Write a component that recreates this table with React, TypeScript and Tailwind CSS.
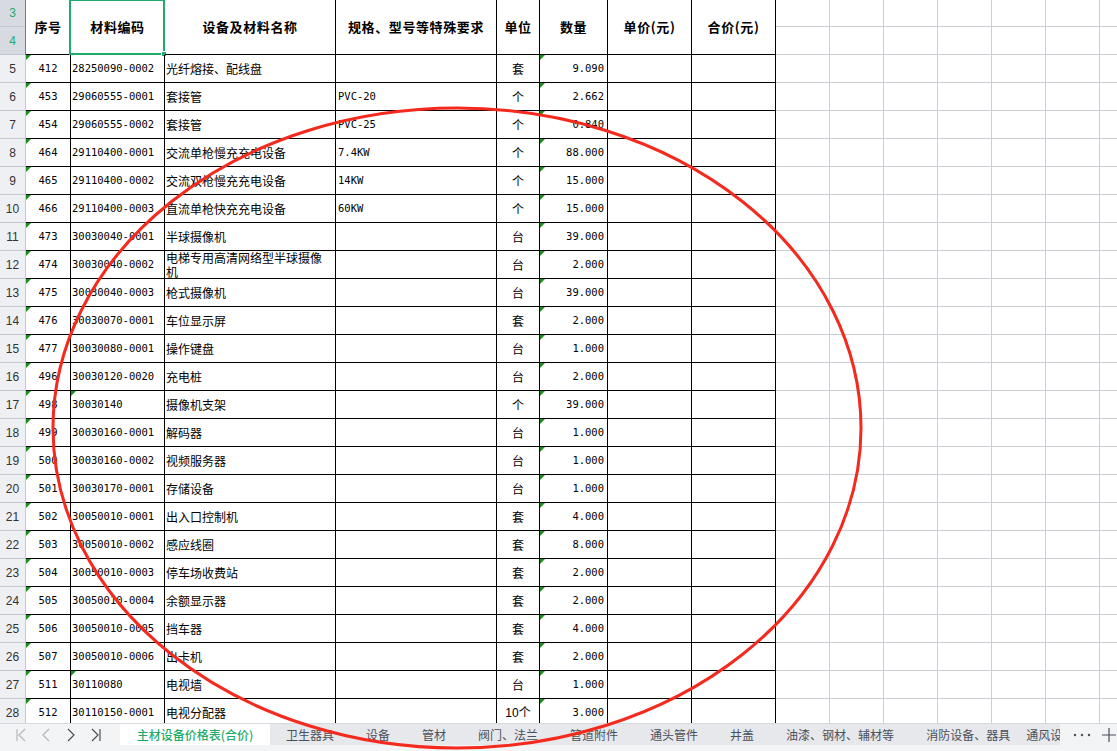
import React from "react";

const MONO = "font-['DejaVu_Sans_Mono','Noto_Sans_CJK_SC',monospace] text-[10.5px]";
const CJK = "font-['Noto_Sans_CJK_SC',sans-serif] text-[12px]";

// widths include the 1px right border
const COL_W = [
  "w-[45px]",
  "w-[94px]",
  "w-[171px]",
  "w-[161px]",
  "w-[43px]",
  "w-[68px]",
  "w-[84px]",
  "w-[84px]",
];
const LIGHT_COUNT = 7;

type Row = [number, string, string, string, string, string, string, boolean?];

const ROWS: Row[] = [
  [5, "412", "28250090-0002", "光纤熔接、配线盘", "", "套", "9.090"],
  [6, "453", "29060555-0001", "套接管", "PVC-20", "个", "2.662"],
  [7, "454", "29060555-0002", "套接管", "PVC-25", "个", "0.840"],
  [8, "464", "29110400-0001", "交流单枪慢充充电设备", "7.4KW", "个", "88.000"],
  [9, "465", "29110400-0002", "交流双枪慢充充电设备", "14KW", "个", "15.000"],
  [10, "466", "29110400-0003", "直流单枪快充充电设备", "60KW", "个", "15.000"],
  [11, "473", "30030040-0001", "半球摄像机", "", "台", "39.000"],
  [12, "474", "30030040-0002", "电梯专用高清网络型半球摄像机", "", "台", "2.000"],
  [13, "475", "30030040-0003", "枪式摄像机", "", "台", "39.000"],
  [14, "476", "30030070-0001", "车位显示屏", "", "套", "2.000"],
  [15, "477", "30030080-0001", "操作键盘", "", "台", "1.000"],
  [16, "496", "30030120-0020", "充电桩", "", "台", "2.000"],
  [17, "498", "30030140", "摄像机支架", "", "个", "39.000", true],
  [18, "499", "30030160-0001", "解码器", "", "台", "1.000"],
  [19, "500", "30030160-0002", "视频服务器", "", "台", "1.000"],
  [20, "501", "30030170-0001", "存储设备", "", "台", "1.000"],
  [21, "502", "30050010-0001", "出入口控制机", "", "套", "4.000"],
  [22, "503", "30050010-0002", "感应线圈", "", "套", "8.000"],
  [23, "504", "30050010-0003", "停车场收费站", "", "套", "2.000"],
  [24, "505", "30050010-0004", "余额显示器", "", "套", "2.000"],
  [25, "506", "30050010-0005", "挡车器", "", "套", "4.000"],
  [26, "507", "30050010-0006", "出卡机", "", "套", "2.000"],
  [27, "511", "30110080", "电视墙", "", "台", "1.000", true],
  [28, "512", "30110150-0001", "电视分配器", "", "10个", "3.000"],
];

const HEADERS = ["序号", "材料编码", "设备及材料名称", "规格、型号等特殊要求", "单位", "数量", "单价(元)", "合价(元)"];

const TABS = [
  "卫生器具",
  "设备",
  "管材",
  "阀门、法兰",
  "管道附件",
  "通头管件",
  "井盖",
  "油漆、钢材、辅材等",
  "消防设备、器具",
];

/** Small green "number stored as text" marker in the top-left corner of a cell. */
function Flag() {
  return (
    <span className="absolute left-0 top-0 h-0 w-0 border-r-[5px] border-t-[5px] border-r-transparent border-t-[#1a8f1a]" />
  );
}

function LightCells({ h }: { h: string }) {
  return (
    <>
      {Array.from({ length: LIGHT_COUNT }).map((_, i) => (
        <div key={i} className={`${h} w-[54px] shrink-0 border-b border-r border-[#c9ced8]`} />
      ))}
    </>
  );
}

function HeaderRow() {
  return (
    <div className="flex h-[55px] shrink-0">
      {/* Row numbers 3 & 4 (selected) */}
      <div className="flex w-[26px] shrink-0 flex-col border-r border-[#1fab6b] bg-[#d7dae0] font-['Liberation_Sans',sans-serif] text-[12px] text-[#1fab6b]">
        <div className="flex h-[27px] items-center justify-center border-b border-[#c3c8d0]">3</div>
        <div className="flex h-[28px] items-center justify-center border-b border-[#c3c8d0]">4</div>
      </div>
      {HEADERS.map((t, i) => (
        <div
          key={t}
          className={`relative flex h-[55px] shrink-0 items-center justify-center border-b border-r border-black font-['Noto_Sans_CJK_SC',sans-serif] text-[13px] font-bold tracking-[0.6px] text-black ${COL_W[i]}`}
        >
          {t}
          {i === 1 && (
            <>
              <span className="absolute -left-[2px] -top-[1px] bottom-[-1px] right-[-1px] border-2 border-[#1fab6b]" />
              <span className="absolute -bottom-[3px] -right-[3px] h-[6px] w-[6px] border border-white bg-[#1fab6b]" />
            </>
          )}
        </div>
      ))}
      <div className="flex flex-col">
        <div className="flex">
          <LightCells h="h-[27px]" />
        </div>
        <div className="flex">
          <LightCells h="h-[28px]" />
        </div>
      </div>
    </div>
  );
}

function DataRow({ row }: { row: Row }) {
  const [n, seq, code, name, spec, unit, qty, codeFlag] = row;
  const wrap = name.length > 13;
  return (
    <div className="flex h-[28px] shrink-0">
      <div className="flex w-[26px] shrink-0 items-center justify-center border-b border-r border-[#c3c8d0] bg-[#eef0f3] font-['Liberation_Sans',sans-serif] text-[12px] text-[#333]">
        {n}
      </div>
      {/* 序号 */}
      <div className={`relative flex shrink-0 items-center justify-center border-b border-r border-black text-black ${MONO} ${COL_W[0]}`}>
        <Flag />
        {seq}
      </div>
      {/* 材料编码 */}
      <div className={`relative flex shrink-0 items-center border-b border-r border-black pl-[1px] text-black ${MONO} ${COL_W[1]}`}>
        {codeFlag && <Flag />}
        {code}
      </div>
      {/* 名称 */}
      <div
        className={`flex shrink-0 items-center overflow-hidden border-b border-r border-black pl-[1px] text-black ${CJK} ${COL_W[2]} ${
          wrap ? "leading-[14px]" : "whitespace-nowrap"
        }`}
      >
        <span className={wrap ? "block w-[160px] pt-[1px]" : ""}>{name}</span>
      </div>
      {/* 规格 */}
      <div className={`flex shrink-0 items-center border-b border-r border-black pl-[2px] text-black ${MONO} ${COL_W[3]}`}>
        {spec}
      </div>
      {/* 单位 */}
      <div className={`flex shrink-0 items-center justify-center border-b border-r border-black text-black ${CJK} ${COL_W[4]}`}>
        {unit === "10个" ? (
          <span>
            <span className="font-['Liberation_Sans',sans-serif] text-[12px]">10</span>个
          </span>
        ) : (
          unit
        )}
      </div>
      {/* 数量 */}
      <div className={`relative flex shrink-0 items-center justify-end border-b border-r border-black pr-[3px] text-black ${MONO} ${COL_W[5]}`}>
        <Flag />
        {qty}
      </div>
      <div className={`shrink-0 border-b border-r border-black ${COL_W[6]}`} />
      <div className={`shrink-0 border-b border-r border-black ${COL_W[7]}`} />
      <LightCells h="h-[28px]" />
    </div>
  );
}

function NavIcon({ kind, dim }: { kind: "first" | "prev" | "next" | "last"; dim?: boolean }) {
  const stroke = dim ? "#b3b7bf" : "#4a4f58";
  return (
    <svg width="12" height="16" viewBox="0 0 12 16" fill="none" stroke={stroke} strokeWidth="1.2">
      {kind === "first" && (
        <>
          <path d="M2 2v12" />
          <path d="M10 2L4 8l6 6" />
        </>
      )}
      {kind === "prev" && <path d="M9 2L3 8l6 6" />}
      {kind === "next" && <path d="M3 2l6 6-6 6" />}
      {kind === "last" && (
        <>
          <path d="M2 2l6 6-6 6" />
          <path d="M10 2v12" />
        </>
      )}
    </svg>
  );
}

function TabBar() {
  return (
    <div className="flex h-[22px] shrink-0 border-t border-[#d6d9df] bg-[#e6e8ec] font-['Noto_Sans_CJK_SC',sans-serif] text-[12px]">
      <div className="flex w-[120px] shrink-0 items-center gap-[13px] bg-[#f3f4f6] pl-[15px]">
        <NavIcon kind="first" dim />
        <NavIcon kind="prev" dim />
        <NavIcon kind="next" />
        <NavIcon kind="last" />
      </div>
      <div className="flex w-[150px] shrink-0 items-center justify-center bg-white font-medium text-[#1fab6b]">
        主材设备价格表(合价)
      </div>
      <div className="flex min-w-0 flex-1 overflow-hidden whitespace-nowrap text-[#4a505a]">
        {TABS.map((t) => (
          <div key={t} className="flex shrink-0 items-center px-4">
            {t}
          </div>
        ))}
        <div className="flex shrink-0 items-center">通风设</div>
      </div>
      <div className="flex w-[57px] shrink-0 items-center gap-[11px] bg-[#f3f4f6] pl-[13px]">
        <svg width="18" height="4" viewBox="0 0 18 4" fill="#4a4f58">
          <circle cx="2" cy="2" r="1.2" />
          <circle cx="9" cy="2" r="1.2" />
          <circle cx="16" cy="2" r="1.2" />
        </svg>
        <svg width="14" height="14" viewBox="0 0 14 14" stroke="#4a4f58" strokeWidth="1.2">
          <path d="M7 0v14M0 7h14" />
        </svg>
      </div>
    </div>
  );
}

export default function App() {
  return (
    <div className="relative flex h-[751px] w-[1117px] flex-col overflow-hidden bg-white">
      {/* Sheet grid */}
      <div className="flex min-h-0 flex-1 flex-col overflow-hidden">
        <HeaderRow />
        {ROWS.map((r) => (
          <DataRow key={r[0]} row={r} />
        ))}
      </div>

      <TabBar />
      <div className="h-[6px] shrink-0 bg-[#f3f4f6]" />

      {/* Hand-drawn red annotation */}
      <svg className="pointer-events-none absolute left-0 top-0" width="1117" height="751" viewBox="0 0 1117 751" fill="none">
        <ellipse cx="457" cy="428" rx="404" ry="320" stroke="#f52a1e" strokeWidth="3" />
      </svg>
    </div>
  );
}
